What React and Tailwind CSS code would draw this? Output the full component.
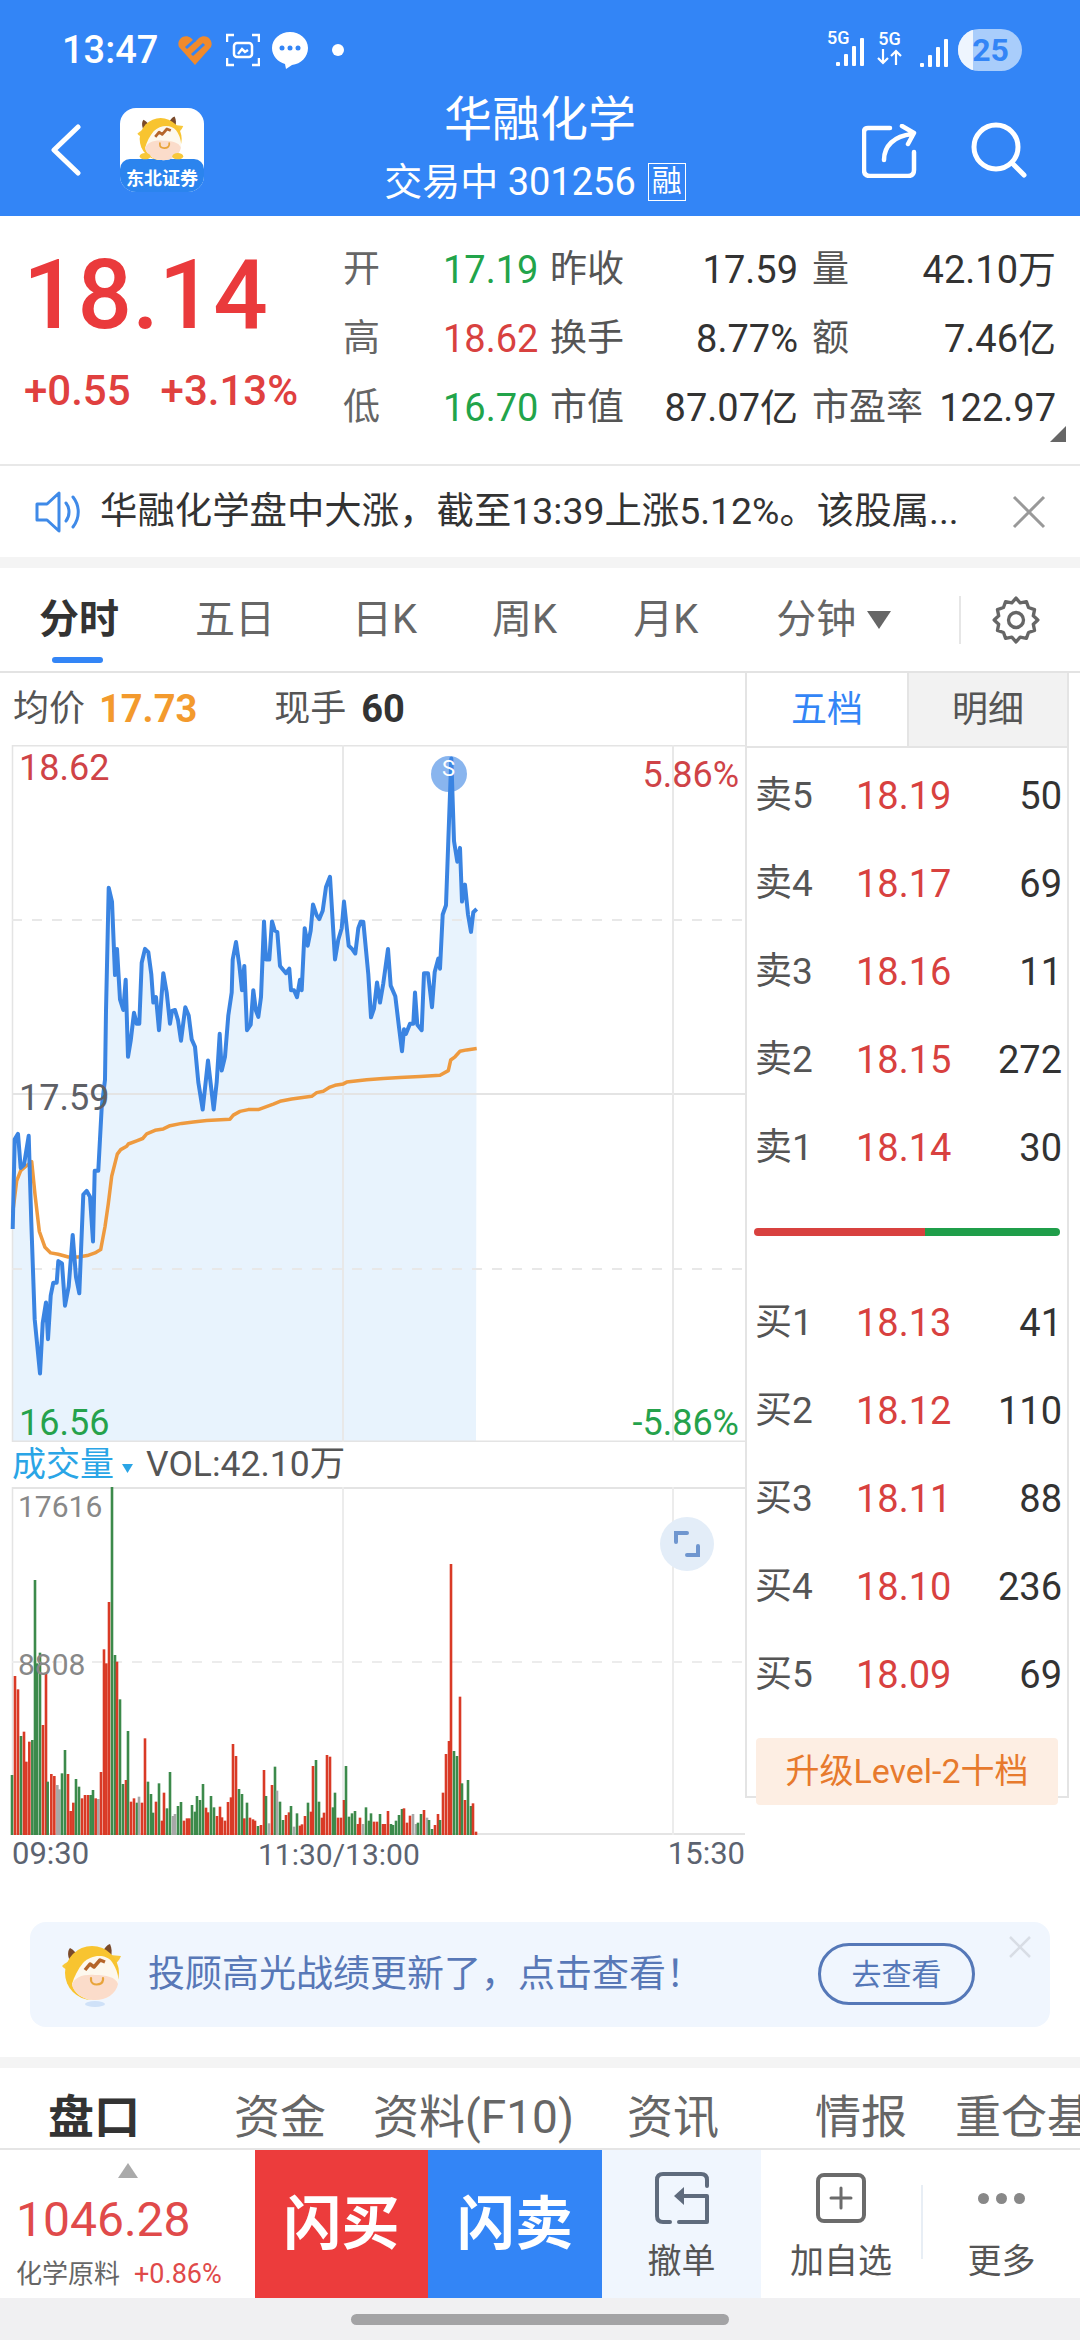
// traced from the reference chart
const bluePts = [[38,1065],[44,870],[54,858],[62,932],[72,925],[86,862],[94,1050],[104,1262],[120,1380],[128,1270],[138,1225],[144,1305],[152,1210],[160,1182],[170,1182],[175,1135],[186,1140],[195,1232],[206,1190],[218,1078],[228,1170],[238,1205],[250,990],[260,982],[270,995],[279,1092],[284,938],[295,938],[305,800],[315,740],[318,590],[326,322],[336,352],[345,512],[351,455],[360,565],[370,588],[377,522],[384,690],[392,655],[402,594],[410,618],[418,618],[425,485],[435,455],[445,462],[454,510],[460,572],[468,560],[477,632],[490,508],[500,550],[510,618],[516,590],[525,588],[534,610],[543,655],[556,582],[566,600],[575,652],[585,668],[595,745],[608,805],[624,698],[641,805],[650,745],[659,640],[665,720],[675,690],[685,600],[695,550],[698,478],[708,440],[718,490],[726,545],[733,492],[741,632],[752,620],[760,545],[768,590],[775,603],[783,560],[792,395],[798,478],[808,478],[816,395],[824,415],[832,418],[840,492],[858,508],[868,498],[873,545],[882,545],[891,560],[900,522],[905,545],[914,410],[923,448],[932,415],[939,358],[950,382],[958,390],[968,372],[978,320],[990,298],[1005,478],[1015,435],[1025,410],[1032,352],[1046,448],[1056,455],[1066,465],[1075,410],[1082,396],[1090,396],[1105,510],[1113,604],[1122,585],[1131,528],[1140,572],[1150,530],[1164,455],[1172,535],[1186,558],[1196,620],[1206,678],[1212,630],[1218,640],[1230,618],[1240,618],[1245,550],[1252,620],[1265,632],[1272,508],[1284,508],[1296,582],[1304,505],[1315,476],[1320,498],[1328,380],[1338,360],[1345,220],[1354,40],[1362,220],[1372,265],[1380,235],[1386,352],[1395,315],[1404,380],[1413,418],[1420,375],[1430,368]];
const orangePts = [[38,1030],[50,960],[62,938],[75,930],[95,918],[105,990],[118,1070],[135,1105],[152,1117],[175,1120],[205,1126],[235,1126],[262,1123],[285,1117],[302,1110],[315,1060],[325,1010],[335,950],[352,902],[362,892],[380,885],[385,880],[410,873],[428,868],[440,858],[465,850],[490,847],[510,840],[545,835],[580,832],[620,829],[690,826],[700,817],[720,809],[745,805],[775,805],[820,793],[840,787],[875,782],[935,776],[950,768],[970,765],[990,756],[1005,752],[1030,749],[1040,745],[1100,740],[1150,737],[1200,735],[1260,733],[1320,730],[1345,720],[1352,697],[1365,690],[1380,678],[1400,675],[1430,672]];
const toPath = (pts) => pts.map(([x, y]) => `${(x / 3).toFixed(1)},${(y / 2.178 - 5).toFixed(1)}`).join(" ");

const bars = "36g1035 45r738 54r778 63g918 72r905 79r995 88r935 97g930 105g450 111g700 120g668 129r885 138r730 143g1055 154r1032 163r1038 172a1065 178a1078 186g1030 195g960 204r1032 212r1143 220r1118 228g1047 237g1070 246r1105 255r1095 264r1095 272g1095 279g1080 287r1105 295a1107 303r1026 312r658 319r700 327r516 336g168 345g675 351r695 360g808 369g1062 378r1050 384g903 393r1115 402r1105 411g1118 417a1100 426r1118 435r925 444g1055 453g1092 459g1148 468r1115 477g1060 486r1172 492r1088 501g1135 510g1026 519a1158 525a1152 534g1128 543g1116 552r1172 561r1165 568r1165 576g1125 585g1145 591g1098 600g1110 609g1062 618r1133 624r1147 633g1098 642g1132 651r1158 660r1130 666r1162 675r1172 684r1116 693r1102 699r942 708r978 717g1077 726g1092 733r1165 741g1118 750r1163 759r1168 765r1172 774g1188 783r1185 792r1020 798g1098 807a1180 816r1065 825g1010 831a1082 840g1115 849g1170 858r1155 867r1147 873g1128 882a1190 891g1150 900r1187 906r1183 915r1158 924g1118 933r1145 939r1008 948g990 957g1115 966r1163 972r1148 981r975 990r980 999g1132 1005g1088 1014r1163 1023r1163 1032r1110 1038g1008 1047g1160 1056g1150 1065g1143 1074r1182 1080r1163 1089a1182 1098g1132 1107g1172 1113g1150 1122r1175 1131r1175 1140g1152 1149r1182 1155r1182 1164r1143 1173g1182 1179g1185 1188g1172 1197g1155 1206g1137 1212r1135 1221r1178 1230r1157 1239a1152 1248a1182 1254g1178 1263g1152 1272r1140 1281a1163 1287g1170 1296g1197 1305r1185 1314r1152 1320g1170 1329r1088 1338r972 1347r933 1353r402 1362g963 1371g978 1380r800 1386g1060 1395r1110 1404g1050 1413g1128 1419r1120 1428r1205"
  .split(" ")
  .map((s) => {
    const m = s.match(/(\d+)([rga])(\d+)/);
    return { x: +m[1], c: m[2], top: +m[3] };
  });
const barColor = { r: "#d93a26", g: "#3c8a4b", a: "#a8a8a8" };

const quotes = [
  ["开", "17.19", "text-[#22a44a]", "昨收", "17.59", "量", "42.10万"],
  ["高", "18.62", "text-[#d8413f]", "换手", "8.77%", "额", "7.46亿"],
  ["低", "16.70", "text-[#22a44a]", "市值", "87.07亿", "市盈率", "122.97"],
];
const sells = [["卖5", "18.19", "50"], ["卖4", "18.17", "69"], ["卖3", "18.16", "11"], ["卖2", "18.15", "272"], ["卖1", "18.14", "30"]];
const buys = [["买1", "18.13", "41"], ["买2", "18.12", "110"], ["买3", "18.11", "88"], ["买4", "18.10", "236"], ["买5", "18.09", "69"]];

const Signal = () => (
  <svg width="28" height="28" viewBox="0 0 28 28" fill="white">
    <rect x="0" y="24" width="4" height="4" rx="1" />
    <rect x="8" y="16" width="4" height="12" rx="1" />
    <rect x="16" y="8" width="4" height="20" rx="1" />
    <rect x="24" y="0" width="4" height="28" rx="1" />
  </svg>
);

// cow mascot, 90 units square with the head at about 42,42
const Mascot = ({ size, hands, shadow }) => (
  <svg width={size} height={size} viewBox="0 0 90 90">
    {shadow && <ellipse cx="45" cy="71" rx="10" ry="3" fill="#cfe1f8" />}
    <path d="M20 28C17 22 18 17 20 15C24 17 27 21 29 24Z" fill="#7a4a2a" />
    <path d="M53 19C54 15 57 12 60 11C62 15 62 20 61 24Z" fill="#7a4a2a" />
    <path d="M12 33C17 28 22 27 26 29L22 38C18 37 14 36 12 33Z" fill="#f8c83a" />
    <path d="M60 22L71 23C69 28 66 31 62 32Z" fill="#f8c83a" />
    <circle cx="42" cy="40" r="27" fill="#f8c430" />
    <path d="M33 30C42 21 56 21 62 29C67 36 69 44 68 50C66 62 54 68 42 67C32 66 24 60 22 51C24 44 28 36 33 30Z" fill="#fdf8ee" />
    <path d="M22 52C24 44 34 41 45 42C56 42 66 44 68 51C66 62 54 68 43 67C32 66 24 60 22 52Z" fill="#fbdcca" />
    <path d="M35 37L40 31L44 34L50 27L55 29" fill="none" stroke="#b5652a" strokeWidth="3.500" strokeLinejoin="round" />
    <path d="M41 45V47C41 53 52 53 53 47V45" fill="none" stroke="#e8a43a" strokeWidth="2.200" strokeLinecap="round" />
    {hands && <ellipse cx="22" cy="62" rx="7" ry="4" fill="#f8c83a" />}
    {hands && <ellipse cx="64" cy="62" rx="7" ry="4" fill="#f8c83a" />}
  </svg>
);

const Book = ({ rows }) =>
  rows.map(([label, price, vol]) => (
    <div key={label} className="h-[88px] flex items-center pl-[8px] pr-[5px]">
      <span className="w-[101px] text-[37px] text-[#555]">{label}</span>
      <span className="text-[38px] text-[#d8413f]">{price}</span>
      <span className="flex-1 text-right text-[38px] text-[#333]">{vol}</span>
    </div>
  ));

export default function App() {
  return (
    <div className="w-[1080px] h-[2340px] overflow-hidden bg-white flex flex-col font-[Roboto,'Noto_Sans_CJK_SC',sans-serif]">
      {/* header */}
      <div className="h-[216px] bg-[#3385f6] text-white flex flex-col shrink-0">
        <div className="h-[100px] flex items-center pl-[62px] pr-[58px]">
          <span className="text-[38px] font-medium w-[116px]">13:47</span>
          <svg width="34" height="30" viewBox="0 0 34 30">
            <path d="M17 30 L1 12 C-2 5 6-2 13 3 L17 7 L21 3 C28-2 36 5 33 12Z" fill="#f08a2c" />
            <path d="M8 13 L17 5 M14 20 L26 9" stroke="#3385f6" strokeWidth="3" />
          </svg>
          <svg className="ml-[14px]" width="34" height="34" viewBox="0 0 34 34" fill="none" stroke="white" strokeWidth="2.500">
            <path d="M1 9V2h7M26 2h7v7M33 25v7h-7M8 32H1v-7" />
            <rect x="8" y="10" width="18" height="14" rx="3" />
            <path d="M12 21l4-5 3 3 3-2" />
          </svg>
          <svg className="ml-[12px]" width="36" height="38" viewBox="0 0 36 38">
            <path d="M18 1C8 1 0 8 0 17c0 8 6 14 13 16l1 5 6-4c9-1 16-8 16-17C36 8 28 1 18 1Z" fill="white" />
            <circle cx="10" cy="17" r="2.500" fill="#3385f6" />
            <circle cx="18" cy="17" r="2.500" fill="#3385f6" />
            <circle cx="26" cy="17" r="2.500" fill="#3385f6" />
          </svg>
          <span className="ml-[24px] w-[12px] h-[12px] rounded-full bg-white" />
          <div className="ml-auto flex items-center">
            <div className="relative w-[39px] h-[36px]">
              <span className="absolute left-0 -top-[3px] text-[18px] font-medium leading-[18px]">5G</span>
              <div className="absolute left-[9px] top-[6px]"><Signal /></div>
            </div>
            <div className="ml-[11px] flex flex-col items-center w-[25px] h-[36px] -mt-[1px]">
              <span className="text-[18px] font-medium leading-[18px] -mt-[2px]">5G</span>
              <svg className="mt-[1px]" width="25" height="16" viewBox="0 0 25 16" fill="none" stroke="white" strokeWidth="2.200">
                <path d="M6 0V14M1 9L6 14L11 9M19 16V2M14 7L19 2L24 7" />
              </svg>
            </div>
            <div className="ml-[18px] mt-[6px]"><Signal /></div>
            <div className="ml-[10px] w-[64px] h-[42px] rounded-full bg-[#a9cdfb] overflow-hidden relative flex items-center justify-center">
              <span className="absolute left-0 top-0 bottom-0 w-[15px] bg-[#eef5fe]" />
              <span className="relative text-[32px] font-bold text-[#3385f6] pl-[1px]">25</span>
            </div>
          </div>
        </div>
        <div className="flex-1 flex items-start">
          <div className="w-[240px] flex items-start pl-[50px]">
            <svg className="mt-[24px]" width="32" height="52" viewBox="0 0 32 52" fill="none" stroke="white" strokeWidth="5" strokeLinecap="round" strokeLinejoin="round">
              <path d="M28 3 L4 26 L28 49" />
            </svg>
            <div className="ml-[38px] mt-[8px] w-[84px] h-[84px] rounded-[16px] overflow-hidden bg-white relative">
              <div className="absolute left-0 right-0 bottom-0 h-[33px] rounded-t-[10px] bg-[#2b84ee] flex items-center justify-center">
                <span className="text-[18px] font-bold leading-[22px] mt-[6px] whitespace-nowrap">东北证券</span>
              </div>
              <div className="absolute left-[8px] top-0"><Mascot size={70} hands /></div>
            </div>
          </div>
          <div className="flex-1 flex flex-col items-center -mt-[1px]">
            <div className="text-[48px] leading-[42px]">华融化学</div>
            <div className="mt-[19px] flex items-center -ml-[10px] text-[38px] leading-[44px]">
              <span>交易中 301256</span>
              <span className="ml-[12px] w-[38px] h-[38px] border border-white text-[30px] leading-[34px] text-center">融</span>
            </div>
          </div>
          <div className="w-[240px] flex items-start pl-[22px]">
            <svg className="mt-[24px]" width="56" height="54" viewBox="0 0 56 54" fill="none" stroke="white" strokeWidth="4.500" strokeLinecap="round" strokeLinejoin="round">
              <path d="M28 4 H6 Q2 4 2 8 V46 Q2 52 8 52 H46 Q52 52 52 46 V28" />
              <path d="M22 36 C22 22 32 12 50 10 M40 2 L52 9 L46 20" />
            </svg>
            <svg className="ml-[52px] mt-[22px]" width="58" height="56" viewBox="0 0 58 56" fill="none" stroke="white" strokeWidth="5" strokeLinecap="round">
              <circle cx="26" cy="25" r="22" />
              <path d="M42 41 L54 53" />
            </svg>
          </div>
        </div>
      </div>

      {/* quote */}
      <div className="h-[250px] shrink-0 relative flex border-b-2 border-[#e8e8e8]">
        <div className="w-[343px] pt-[24px]">
          <div className="pl-[23px] text-[96px] leading-[110px] font-medium text-[#ea3a3c]">18.14</div>
          <div className="mt-[16px] pl-[24px] flex text-[42px] leading-[50px] font-medium text-[#e0403f]">
            <span>+0.55</span>
            <span className="ml-[30px]">+3.13%</span>
          </div>
        </div>
        <div className="flex-1 pt-[31px] pr-[24px] flex flex-col gap-[23px]">
          {quotes.map(([a, b, cls, c, d, e, f]) => (
            <div key={a} className="h-[46px] flex items-center text-[38px]">
              <span className="w-[100px] text-[37px] text-[#666]">{a}</span>
              <span className={`w-[94px] ${cls}`}>{b}</span>
              <span className="ml-[13px] w-[75px] text-[37px] text-[#555]">{c}</span>
              <span className="w-[173px] text-right text-[#333]">{d}</span>
              <span className="ml-[14px] text-[37px] text-[#555]">{e}</span>
              <span className="flex-1 text-right text-[#333]">{f}</span>
            </div>
          ))}
        </div>
        <svg className="absolute right-[14px] bottom-[22px]" width="16" height="16" viewBox="0 0 16 16">
          <path d="M16 0V16H0Z" fill="#666" />
        </svg>
      </div>

      {/* notice */}
      <div className="h-[91px] shrink-0 flex items-center pl-[35px] pr-[34px]">
        <svg width="46" height="42" viewBox="0 0 46 42" fill="none" stroke="#3f8ae8" strokeWidth="3" strokeLinejoin="round" strokeLinecap="round">
          <path d="M2 13H12L24 2V40L12 29H2Z" />
          <path d="M31 12c4 5 4 13 0 18M38 6c7 9 7 21 0 30" />
        </svg>
        <span className="ml-[19px] text-[37.4px] text-[#333] whitespace-nowrap">华融化学盘中大涨，截至13:39上涨5.12%。该股属...</span>
        <svg className="ml-auto" width="34" height="34" viewBox="0 0 34 34" stroke="#999" strokeWidth="3">
          <path d="M2 2L32 32M32 2L2 32" />
        </svg>
      </div>
      <div className="h-[11px] shrink-0 bg-[#f4f4f4]" />

      {/* period tabs */}
      <div className="h-[105px] shrink-0 relative flex items-center text-[40px] text-[#666] border-b-2 border-[#e3e3e3]">
        <span className="ml-[39px] font-bold text-[#333]">分时</span>
        <span className="ml-[76px]">五日</span>
        <span className="ml-[77px]">日K</span>
        <span className="ml-[75px]">周K</span>
        <span className="ml-[76px]">月K</span>
        <span className="ml-[78px]">分钟</span>
        <svg className="ml-[11px]" width="24" height="18" viewBox="0 0 24 18"><path d="M0 0H24L12 18Z" fill="#666" /></svg>
        <span className="ml-[68px] w-[2px] h-[48px] bg-[#e6e6e6]" />
        <svg className="ml-[30px]" width="50" height="50" viewBox="0 0 24 24" fill="none" stroke="#666" strokeWidth="1.600" strokeLinejoin="round">
          <path d="M12 1.500l2 2.300 3-.6 1 2.800 2.900 1-.6 3L22.500 12l-2.200 2 .6 3-2.900 1-1 2.800-3-.6-2 2.300-2-2.300-3 .6-1-2.800-2.900-1 .6-3L1.500 12l2.200-2-.6-3 2.900-1 1-2.800 3 .6z" />
          <circle cx="12" cy="12" r="3.600" />
        </svg>
        <span className="absolute left-[52px] bottom-[8px] w-[51px] h-[6px] rounded-full bg-[#3385f6]" />
      </div>

      {/* chart + order book */}
      <div className="flex shrink-0">
        <div className="w-[745px]">
          <div className="h-[72px] flex items-center text-[36px] pl-[13px] text-[#555]">
            <span>均价</span>
            <span className="ml-[14px] font-bold text-[38px] text-[#f39a2d]">17.73</span>
            <span className="ml-[77px]">现手</span>
            <span className="ml-[15px] font-bold text-[38px] text-[#333]">60</span>
          </div>
          <div className="h-[697px] relative">
            <svg className="absolute inset-0" width="745" height="697" viewBox="0 0 745 697">
              <polygon points={`12.700,697 ${toPath(bluePts)} 476,697`} fill="#e8f3fd" />
              <path d="M12 0.500H745M12 696.500H745" stroke="#e4e4e4" strokeWidth="2" />
              <path d="M12.500 0V697" stroke="#e4e4e4" strokeWidth="1.500" />
              <path d="M12 175H745M12 524H745" stroke="#e8e8e8" strokeWidth="2" strokeDasharray="10 10" />
              <path d="M12 349H745" stroke="#e4e4e4" strokeWidth="2" />
              <path d="M343 0V697M673 0V697" stroke="#e8e8e8" strokeWidth="2" />
              <polyline points={toPath(orangePts)} fill="none" stroke="#ee9a3f" strokeWidth="3.500" strokeLinejoin="round" />
              <polyline points={toPath(bluePts)} fill="none" stroke="#3a84e2" strokeWidth="4" strokeLinejoin="round" />
              <circle cx="449" cy="29" r="18" fill="#3a84e2" fillOpacity="0.6" />
            </svg>
            <span className="absolute left-[442px] top-[12px] text-[22px] leading-[24px] text-white">S</span>
            <span className="absolute left-[19px] top-[3px] text-[36px] leading-[40px] text-[#cf4347]">18.62</span>
            <span className="absolute right-[6px] top-[10px] text-[36px] leading-[40px] text-[#cf4347]">5.86%</span>
            <span className="absolute left-[19px] top-[333px] text-[36px] leading-[40px] text-[#5e6066]">17.59</span>
            <span className="absolute left-[19px] bottom-[-1px] text-[36px] leading-[40px] text-[#25a24c]">16.56</span>
            <span className="absolute right-[6px] bottom-[-1px] text-[36px] leading-[40px] text-[#25a24c]">-5.86%</span>
          </div>
          <div className="h-[45px] flex items-center pl-[12px] text-[34px]">
            <span className="text-[#2aa5e6]">成交量</span>
            <svg className="ml-[8px] mt-[8px]" width="11" height="9" viewBox="0 0 11 9"><path d="M0 0H11L5.500 9Z" fill="#2aa5e6" /></svg>
            <span className="ml-[13px] text-[35.5px] text-[#555]">VOL:42.10万</span>
          </div>
          <div className="h-[348px] relative">
            <svg className="absolute inset-0" width="745" height="348" viewBox="0 0 745 348">
              <path d="M12 1H745M12 347H745" stroke="#e4e4e4" strokeWidth="2" />
              <path d="M12.500 0V348" stroke="#e4e4e4" strokeWidth="1.500" />
              <path d="M12 175H745" stroke="#ececec" strokeWidth="2" strokeDasharray="10 10" />
              <path d="M343 0V348M673 0V348" stroke="#ececec" strokeWidth="2" />
              {bars.map((b) => (
                <rect key={b.x} x={b.x / 3 - 1.3} y={b.top / 3 - 57} width="2.600" height={(1215 - b.top) / 3} fill={barColor[b.c]} />
              ))}
            </svg>
            <span className="absolute left-[18px] top-[2px] text-[30px] leading-[36px] text-[#888]">17616</span>
            <span className="absolute left-[18px] top-[160px] text-[30px] leading-[36px] text-[#888]">8808</span>
            <div className="absolute left-[660px] top-[30px] w-[54px] h-[54px] rounded-full bg-[#e3edf8] flex items-center justify-center">
              <svg width="26" height="26" viewBox="0 0 26 26" fill="none" stroke="#6f96cf" strokeWidth="4" strokeLinecap="round">
                <path d="M2 11V2H13M24 15V24H13" />
              </svg>
            </div>
          </div>
          <div className="h-[38px] flex items-center pl-[12px] text-[31px] text-[#5c6370]">
            <span className="w-[246px]">09:30</span>
            <span className="text-[30px]">11:30/13:00</span>
            <span className="ml-auto">15:30</span>
          </div>
        </div>

        <div className="w-[324px] h-[1161px] flex flex-col">
          <div className="h-[1125px] border-x-2 border-b-2 border-[#e4e4e4]">
            <div className="h-[75px] flex text-[36px] border-b-2 border-[#e4e4e4]">
              <span className="w-[160px] flex items-center justify-center text-[#3385f6]">五档</span>
              <span className="flex-1 flex items-center justify-center text-[#555] bg-[#f2f2f2] border-l-2 border-[#e4e4e4]">明细</span>
            </div>
            <div className="pt-[4px]">
              <Book rows={sells} />
            </div>
            <div className="mt-[36px] mx-[7px] h-[8px] rounded-full overflow-hidden flex">
              <span className="w-[171px] bg-[#d8413f]" />
              <span className="flex-1 bg-[#1f9e4a]" />
            </div>
            <div className="mt-[43px]">
              <Book rows={buys} />
            </div>
            <div className="mt-[19px] mx-[9px] h-[67px] bg-[#fdeee3] rounded-[4px] flex items-center justify-center text-[34px] text-[#e77a2d]">
              升级Level-2十档
            </div>
          </div>
        </div>
      </div>

      {/* promo banner */}
      <div className="flex-1 flex flex-col justify-end">
        <div className="mx-[30px] h-[105px] rounded-[16px] bg-[#f0f6fe] relative flex items-center pl-[20px]">
          <div className="w-[90px] h-[90px] shrink-0 mt-[6px]"><Mascot size={90} shadow /></div>
          <span className="ml-[8px] text-[37px] text-[#5878b7]">投顾高光战绩更新了，点击查看！</span>
          <span className="absolute left-[788px] top-[21px] w-[157px] h-[62px] rounded-full border-[3px] border-[#5578b8] flex items-center justify-center text-[30px] text-[#5578b8]">去查看</span>
          <svg className="absolute right-[18px] top-[14px]" width="24" height="22" viewBox="0 0 24 22" stroke="#d8dde5" strokeWidth="2.500">
            <path d="M2 1L22 21M22 1L2 21" />
          </svg>
        </div>
        <div className="h-[30px]" />
        <div className="h-[11px] bg-[#f4f4f4]" />

        <div className="h-[82px] flex items-center pt-[18px] text-[46px] text-[#666] border-b-2 border-[#e5e5e5] whitespace-nowrap overflow-hidden">
          <span className="ml-[48px] font-bold text-[#333]">盘口</span>
          <span className="ml-[94px]">资金</span>
          <span className="ml-[47px]">资料(F10)</span>
          <span className="ml-[53px]">资讯</span>
          <span className="ml-[96px]">情报</span>
          <span className="ml-[48px]">重仓基</span>
        </div>

        <div className="h-[148px] flex">
          <div className="w-[255px] relative">
            <svg className="absolute left-[118px] top-[13px]" width="20" height="15" viewBox="0 0 20 15"><path d="M10 0L20 15H0Z" fill="#aaa" /></svg>
            <div className="absolute left-[16px] top-[41px] text-[48px] leading-[58px] text-[#e04a4a]">1046.28</div>
            <div className="absolute left-[16px] top-[108px] flex items-center text-[26px] leading-[32px]">
              <span className="text-[#666]">化学原料</span>
              <span className="ml-[14px] text-[27px] text-[#e04a4a]">+0.86%</span>
            </div>
          </div>
          <div className="w-[173px] bg-[#ec3c3c] text-white text-[58px] font-bold flex items-center justify-center">闪买</div>
          <div className="w-[174px] bg-[#3385f6] text-white text-[58px] font-bold flex items-center justify-center">闪卖</div>
          <div className="w-[159px] bg-[#f0f6fe] flex flex-col items-center pt-[21px] text-[34px] text-[#555]">
            <svg width="56" height="54" viewBox="0 0 56 54" fill="none" stroke="#5f6b7d" strokeWidth="4" strokeLinejoin="round" strokeLinecap="round">
              <path d="M16 51H9Q3 51 3 45V9Q3 3 9 3H47Q53 3 53 9V15" />
              <path d="M25 51H53V25H28" />
              <path d="M30 16L20 25L30 34Z" fill="#5f6b7d" stroke="none" />
            </svg>
            <span className="mt-[14px] leading-[44px]">撤单</span>
          </div>
          <div className="w-[160px] flex flex-col items-center pt-[23px] text-[34px] text-[#555]">
            <svg width="50" height="50" viewBox="0 0 50 50" fill="none" stroke="#6b6b6b" strokeWidth="4" strokeLinecap="round">
              <rect x="2" y="2" width="46" height="46" rx="6" />
              <path d="M25 15V35M15 25H35" strokeWidth="3" />
            </svg>
            <span className="mt-[16px] leading-[44px]">加自选</span>
          </div>
          <span className="w-[2px] h-[74px] mt-[35px] bg-[#e8eef5]" />
          <div className="flex-1 flex flex-col items-center pt-[23px] text-[34px] text-[#555]">
            <div className="h-[50px] flex items-center gap-[7px]">
              <span className="w-[11px] h-[11px] rounded-full bg-[#888]" />
              <span className="w-[11px] h-[11px] rounded-full bg-[#888]" />
              <span className="w-[11px] h-[11px] rounded-full bg-[#888]" />
            </div>
            <span className="mt-[16px] leading-[44px]">更多</span>
          </div>
        </div>

        <div className="h-[42px] bg-[#f0f0f2] flex justify-center pt-[16px]">
          <span className="w-[378px] h-[11px] rounded-full bg-[#a3a3a5]" />
        </div>
      </div>
    </div>
  );
}
